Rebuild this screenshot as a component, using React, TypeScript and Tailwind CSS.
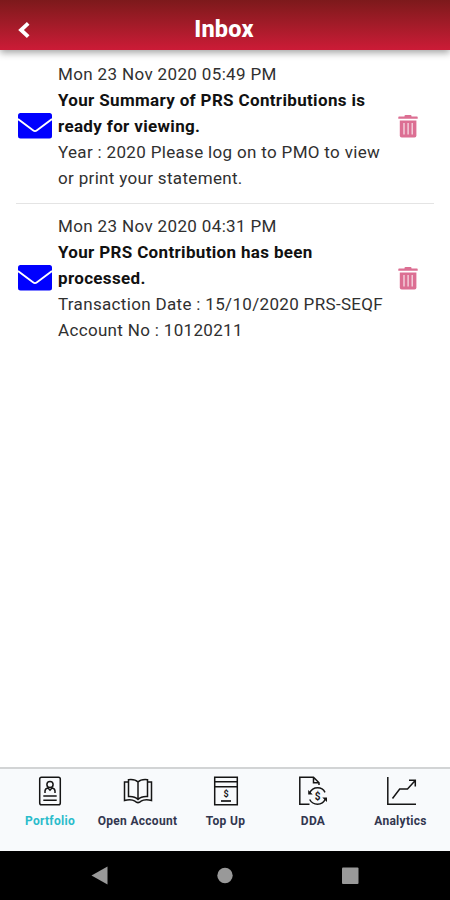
import React from "react";

const MESSAGES = [
  {
    date: "Mon 23 Nov 2020 05:49 PM",
    title: ["Your Summary of PRS Contributions is", "ready for viewing."],
    body: ["Year : 2020 Please log on to PMO to view", "or print your statement."],
  },
  {
    date: "Mon 23 Nov 2020 04:31 PM",
    title: ["Your PRS Contribution has been", "processed."],
    body: ["Transaction Date : 15/10/2020 PRS-SEQF", "Account No : 10120211"],
  },
];

const EnvelopeIcon = () => (
  <svg width="34" height="26" viewBox="0 0 34 26" className="block">
    <rect width="34" height="25.5" rx="2.5" fill="#0000ff" />
    <path d="M0 6 L15 17.3 Q17 18.8 19 17.3 L34 6" fill="none" stroke="#fff" strokeWidth="1.8" />
  </svg>
);

const TrashIcon = () => (
  <svg width="20" height="23" viewBox="0 0 20 23" className="block">
    <path d="M6.5 1 Q6.5 0 7.5 0 H12.5 Q13.5 0 13.5 1 V1.5 H19 Q19.7 1.5 19.7 2.2 V3.8 H0.3 V2.2 Q0.3 1.5 1 1.5 H6.5Z" fill="#dc6f93" />
    <path d="M1.8 5.5 H18.4 V20.5 Q18.4 22.4 16.5 22.4 H3.7 Q1.8 22.4 1.8 20.5Z" fill="#dc6f93" />
    <path d="M6 8 V19.5 M10.1 8 V19.5 M14.2 8 V19.5" stroke="#fff" strokeOpacity="0.75" strokeWidth="1.3" />
  </svg>
);

const PortfolioIcon = () => (
  <svg width="32" height="32" viewBox="0 0 32 32" fill="none" stroke="#151515" strokeWidth="1.5">
    <rect x="5.7" y="2.2" width="20.6" height="27.6" rx="1.8" />
    <circle cx="16" cy="9.5" r="3.1" />
    <path d="M11 18 V16 Q11 13.7 14 13 L16 15.2 L18 13 Q21 13.7 21 16 V18" />
    <path d="M9.3 21 H22.7 M9.3 25.3 H22.7" />
  </svg>
);

const BookIcon = () => (
  <svg width="32" height="32" viewBox="0 0 32 32" fill="none" stroke="#151515" strokeWidth="1.5">
    <path d="M16 7 Q13 4 6.5 4.7 V21.5 Q12.5 21 16 24.5 Q19.5 21 25.5 21.5 V4.7 Q19 4 16 7 V24.5" />
    <path d="M6.5 7 H2.5 V25.5 Q9 23.7 13 26.2 Q16 29 19 26.2 Q23 23.7 29.5 25.5 V7 H25.5" />
  </svg>
);

const TopUpIcon = () => (
  <svg width="32" height="32" viewBox="0 0 32 32" fill="none" stroke="#151515" strokeWidth="1.5">
    <path d="M4.7 2.3 H27.3 V29.7 H4.7Z M4.7 6.8 H27.3 M4.7 11.7 H27.3" />
    <path d="M11 26 H21" strokeWidth="1.7" />
    <text x="16" y="22" textAnchor="middle" fontSize="9" fontWeight="700" fill="#151515" stroke="none">$</text>
  </svg>
);

const DdaIcon = () => (
  <svg width="32" height="32" viewBox="0 0 32 32" fill="none" stroke="#151515" strokeWidth="1.5">
    <path d="M12.5 29.3 H2.8 V2.2 H16.5 L22 7.8 V10 M16.5 2.2 V7.8 H22" />
    <path d="M12.6 18 Q15 12.8 20.6 12.8 Q25.8 12.8 28 17.3 M12.7 24.5 Q15.2 29.2 20.5 29.2 Q26 29.2 28.5 23.8" />
    <path d="M11.2 15 V19.5 H15.7Z M30 27 V22.5 H25.3Z" fill="#151515" stroke="none" />
    <text x="20.5" y="24.8" textAnchor="middle" fontSize="10" fontWeight="700" fill="#151515" stroke="none">$</text>
  </svg>
);

const AnalyticsIcon = () => (
  <svg width="32" height="32" viewBox="0 0 32 32" fill="none" stroke="#151515" strokeWidth="1.5">
    <path d="M2.8 2 V29.3 H31" />
    <path d="M7.5 23.5 L14.7 14 H22.5 L30 5.8 M24 5.3 H30.3 V11.5" />
  </svg>
);

const TABS = [
  { label: "Portfolio", icon: PortfolioIcon, color: "text-[#2abccb]" },
  { label: "Open Account", icon: BookIcon, color: "text-[#32364f]" },
  { label: "Top Up", icon: TopUpIcon, color: "text-[#32364f]" },
  { label: "DDA", icon: DdaIcon, color: "text-[#32364f]" },
  { label: "Analytics", icon: AnalyticsIcon, color: "text-[#32364f]" },
];

const App: React.FC = () => (
  <div className="flex h-[900px] w-[450px] flex-col overflow-hidden bg-white font-['Roboto',sans-serif]">
    {/* Header */}
    <header className="relative flex h-[50px] shrink-0 items-center bg-linear-to-b from-[#7d191b] to-[#cc1b37] px-[18px] pt-[9px] shadow-[0_3px_7px_rgba(0,0,0,0.35)]">
      <svg width="12" height="18" viewBox="0 0 12 18" fill="none" stroke="#fff" strokeWidth="3.8">
        <path d="M10.2 2.3 L3 9 L10.2 15.7" />
      </svg>
      <h1 className="flex-1 pr-[14px] pb-0.5 text-center text-[23.5px] leading-7 font-extrabold tracking-[0.2px] text-white">
        Inbox
      </h1>
    </header>

    {/* Messages */}
    <main className="flex-1 px-4 pt-[11px]">
      {MESSAGES.map((m) => (
        <div
          key={m.date}
          className="mb-[9px] flex items-center border-b border-[#e4e4e4] pb-3 last:border-0"
        >
          <div className="w-[42px] shrink-0 pl-[2px]">
            <EnvelopeIcon />
          </div>
          <div className="flex-1 text-[17px] leading-[26px] tracking-[0.36px] whitespace-nowrap text-[#303030]">
            <p>{m.date}</p>
            {m.title.map((line) => (
              <p key={line} className="font-bold tracking-[0.34px] text-[#111]">{line}</p>
            ))}
            {m.body.map((line) => (
              <p key={line} className="tracking-[0.33px]">{line}</p>
            ))}
          </div>
          <div className="w-[36px] shrink-0">
            <TrashIcon />
          </div>
        </div>
      ))}
    </main>

    {/* Tab bar */}
    <nav className="grid h-[84px] shrink-0 grid-cols-[100px_75px_101px_74px_101px] border-t-2 border-[#d2d4d5] bg-[#f8fafc] pt-[6px]">
      {TABS.map((t) => (
        <div key={t.label} className="flex flex-col items-center">
          <t.icon />
          <span className={`mt-[6px] text-[12px] leading-4 font-bold tracking-[0.3px] whitespace-nowrap ${t.color}`}>
            {t.label}
          </span>
        </div>
      ))}
    </nav>

    {/* System navigation */}
    <footer className="h-[49px] shrink-0 bg-black">
      <svg width="450" height="49" viewBox="0 0 450 49" fill="#999">
        <path d="M91.5 24.5 L107.5 15.5 V33.5Z" />
        <circle cx="225" cy="24.5" r="7.7" />
        <rect x="342" y="16.5" width="16.5" height="16.5" rx="1" />
      </svg>
    </footer>
  </div>
);

export default App;
